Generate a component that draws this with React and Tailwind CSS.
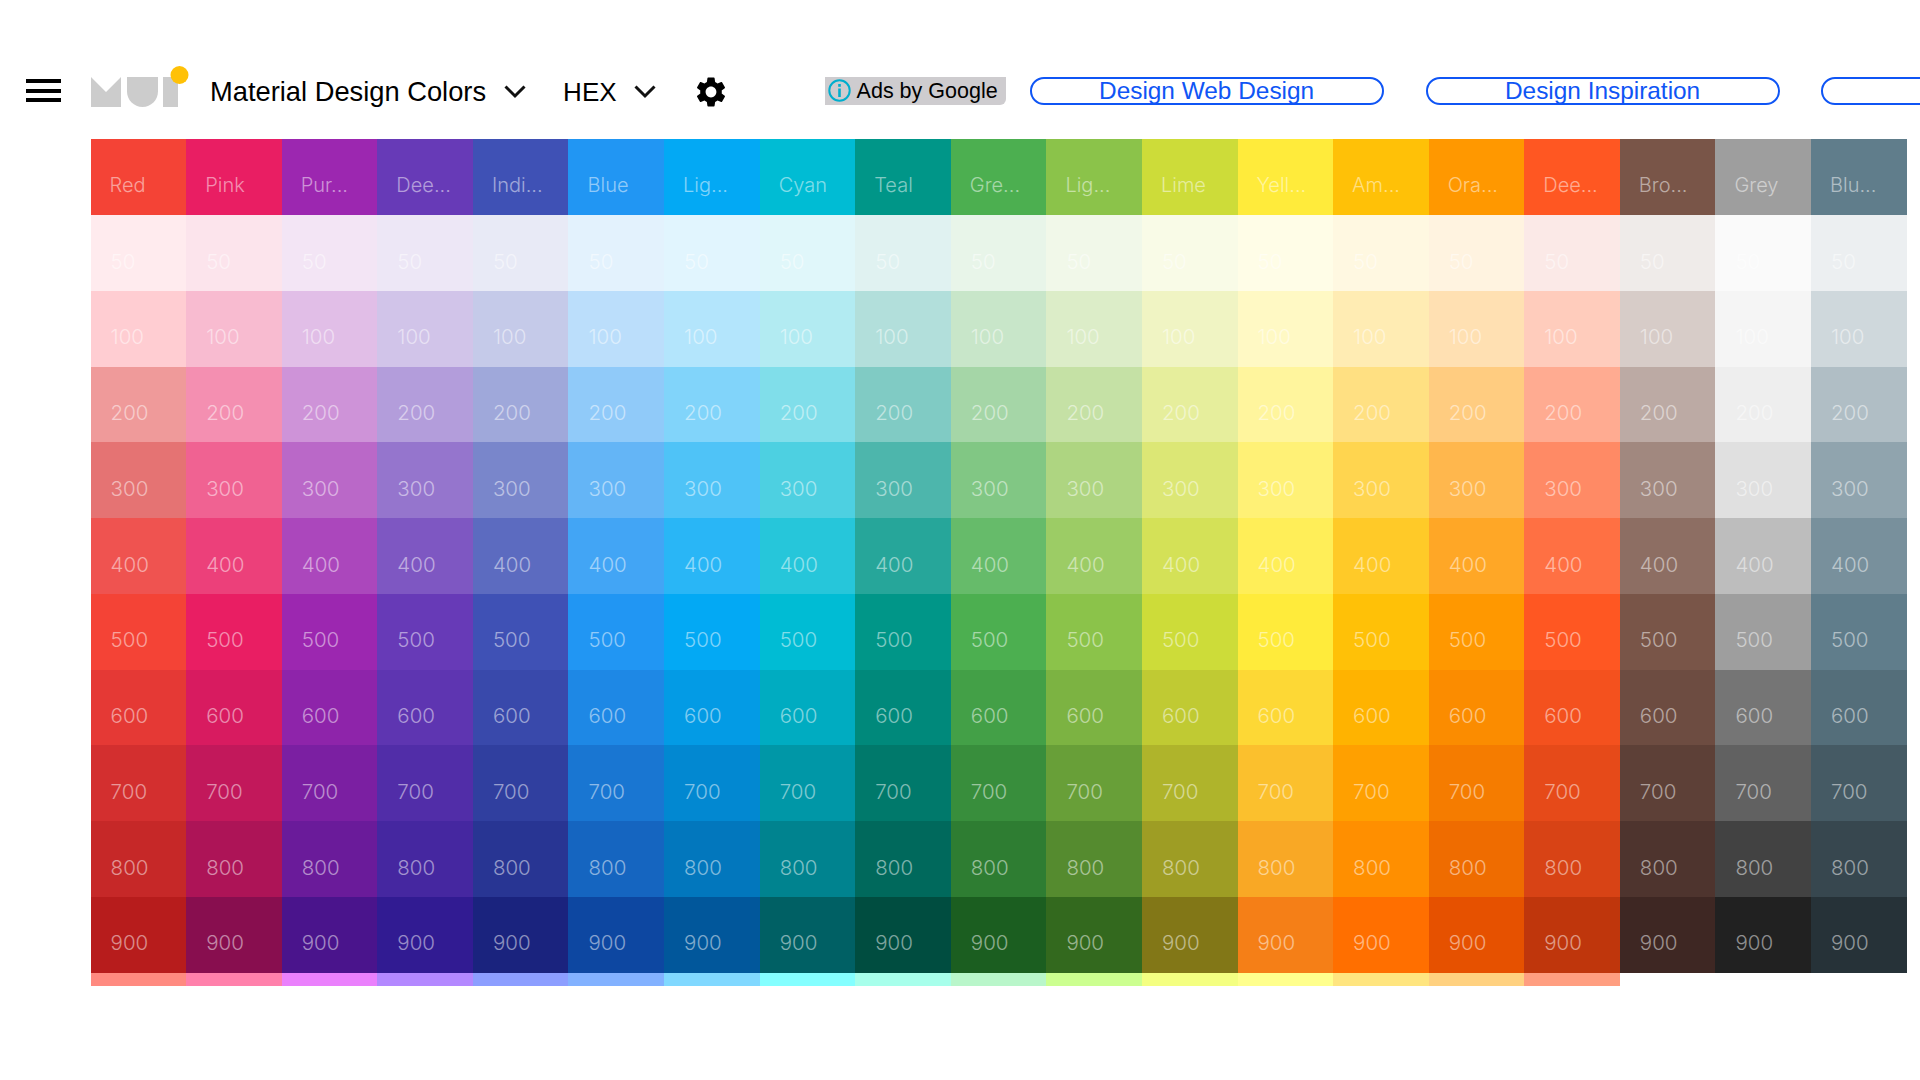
import { MdSettings } from "react-icons/md";

const shades = ["50", "100", "200", "300", "400", "500", "600", "700", "800", "900"];

const palette = [
  { label: "Red", main: "#F44336", tones: ["#FFEBEE", "#FFCDD2", "#EF9A9A", "#E57373", "#EF5350", "#F44336", "#E53935", "#D32F2F", "#C62828", "#B71C1C"], accent: "#FF8A80" },
  { label: "Pink", main: "#E91E63", tones: ["#FCE4EC", "#F8BBD0", "#F48FB1", "#F06292", "#EC407A", "#E91E63", "#D81B60", "#C2185B", "#AD1457", "#880E4F"], accent: "#FF80AB" },
  { label: "Pur...", main: "#9C27B0", tones: ["#F3E5F5", "#E1BEE7", "#CE93D8", "#BA68C8", "#AB47BC", "#9C27B0", "#8E24AA", "#7B1FA2", "#6A1B9A", "#4A148C"], accent: "#EA80FC" },
  { label: "Dee...", main: "#673AB7", tones: ["#EDE7F6", "#D1C4E9", "#B39DDB", "#9575CD", "#7E57C2", "#673AB7", "#5E35B1", "#512DA8", "#4527A0", "#311B92"], accent: "#B388FF" },
  { label: "Indi...", main: "#3F51B5", tones: ["#E8EAF6", "#C5CAE9", "#9FA8DA", "#7986CB", "#5C6BC0", "#3F51B5", "#3949AB", "#303F9F", "#283593", "#1A237E"], accent: "#8C9EFF" },
  { label: "Blue", main: "#2196F3", tones: ["#E3F2FD", "#BBDEFB", "#90CAF9", "#64B5F6", "#42A5F5", "#2196F3", "#1E88E5", "#1976D2", "#1565C0", "#0D47A1"], accent: "#82B1FF" },
  { label: "Lig...", main: "#03A9F4", tones: ["#E1F5FE", "#B3E5FC", "#81D4FA", "#4FC3F7", "#29B6F6", "#03A9F4", "#039BE5", "#0288D1", "#0277BD", "#01579B"], accent: "#80D8FF" },
  { label: "Cyan", main: "#00BCD4", tones: ["#E0F7FA", "#B2EBF2", "#80DEEA", "#4DD0E1", "#26C6DA", "#00BCD4", "#00ACC1", "#0097A7", "#00838F", "#006064"], accent: "#84FFFF" },
  { label: "Teal", main: "#009688", tones: ["#E0F2F1", "#B2DFDB", "#80CBC4", "#4DB6AC", "#26A69A", "#009688", "#00897B", "#00796B", "#00695C", "#004D40"], accent: "#A7FFEB" },
  { label: "Gre...", main: "#4CAF50", tones: ["#E8F5E9", "#C8E6C9", "#A5D6A7", "#81C784", "#66BB6A", "#4CAF50", "#43A047", "#388E3C", "#2E7D32", "#1B5E20"], accent: "#B9F6CA" },
  { label: "Lig...", main: "#8BC34A", tones: ["#F1F8E9", "#DCEDC8", "#C5E1A5", "#AED581", "#9CCC65", "#8BC34A", "#7CB342", "#689F38", "#558B2F", "#33691E"], accent: "#CCFF90" },
  { label: "Lime", main: "#CDDC39", tones: ["#F9FBE7", "#F0F4C3", "#E6EE9C", "#DCE775", "#D4E157", "#CDDC39", "#C0CA33", "#AFB42B", "#9E9D24", "#827717"], accent: "#F4FF81" },
  { label: "Yell...", main: "#FFEB3B", tones: ["#FFFDE7", "#FFF9C4", "#FFF59D", "#FFF176", "#FFEE58", "#FFEB3B", "#FDD835", "#FBC02D", "#F9A825", "#F57F17"], accent: "#FFFF8D" },
  { label: "Am...", main: "#FFC107", tones: ["#FFF8E1", "#FFECB3", "#FFE082", "#FFD54F", "#FFCA28", "#FFC107", "#FFB300", "#FFA000", "#FF8F00", "#FF6F00"], accent: "#FFE57F" },
  { label: "Ora...", main: "#FF9800", tones: ["#FFF3E0", "#FFE0B2", "#FFCC80", "#FFB74D", "#FFA726", "#FF9800", "#FB8C00", "#F57C00", "#EF6C00", "#E65100"], accent: "#FFD180" },
  { label: "Dee...", main: "#FF5722", tones: ["#FBE9E7", "#FFCCBC", "#FFAB91", "#FF8A65", "#FF7043", "#FF5722", "#F4511E", "#E64A19", "#D84315", "#BF360C"], accent: "#FF9E80" },
  { label: "Bro...", main: "#795548", tones: ["#EFEBE9", "#D7CCC8", "#BCAAA4", "#A1887F", "#8D6E63", "#795548", "#6D4C41", "#5D4037", "#4E342E", "#3E2723"] },
  { label: "Grey", main: "#9E9E9E", tones: ["#FAFAFA", "#F5F5F5", "#EEEEEE", "#E0E0E0", "#BDBDBD", "#9E9E9E", "#757575", "#616161", "#424242", "#212121"] },
  { label: "Blu...", main: "#607D8B", tones: ["#ECEFF1", "#CFD8DC", "#B0BEC5", "#90A4AE", "#78909C", "#607D8B", "#546E7A", "#455A64", "#37474F", "#263238"] },
];

function Chevron() {
  return (
    <svg width="22" height="14" viewBox="0 0 22 14" fill="none" stroke="#111" strokeWidth="3">
      <path d="M1.5 1.5L11 11L20.5 1.5" />
    </svg>
  );
}

function Logo() {
  return (
    <svg width="98" height="41" viewBox="0 0 98 41" className="shrink-0">
      <path d="M0 11L15 26L30 11V41H0Z" fill="#ccc" />
      <path d="M36 11H67V25.5C67 34 60 41 51.5 41S36 34 36 25.5Z" fill="#ccc" />
      <rect x="72" y="11" width="15" height="30" fill="#ccc" />
      <circle cx="88.5" cy="9" r="9" fill="#FFC107" />
    </svg>
  );
}

function HeadCell({ color, text }) {
  return (
    <div
      className="flex h-[75.75px] items-center pl-[19px] pt-[15px] text-[20px] font-light text-white/50"
      style={{ backgroundColor: color }}
    >
      {text}
    </div>
  );
}

function ShadeCell({ color, text }) {
  return (
    <div
      className="flex h-[75.75px] items-center pl-[20px] pt-[18px] text-[20.5px] font-light text-white/50"
      style={{ backgroundColor: color }}
    >
      {text}
    </div>
  );
}

export default function App() {
  return (
    <div className="h-screen w-screen overflow-hidden bg-white font-['Inter',sans-serif]">
      <header className="flex h-[139.3px] items-center pl-[26px] pt-[42.3px] font-['Liberation_Sans',sans-serif]">
        <div className="flex w-[35px] shrink-0 flex-col gap-[5.5px]">
          <span className="h-1 bg-black" />
          <span className="h-1 bg-black" />
          <span className="h-1 bg-black" />
        </div>
        <div className="ml-[30px] -mt-[9px] shrink-0">
          <Logo />
        </div>
        <span className="ml-[21px] mt-[3px] shrink-0 text-[27.3px] text-black">Material Design Colors</span>
        <span className="ml-[18px] mt-[2px] shrink-0">
          <Chevron />
        </span>
        <span className="ml-[37px] mt-[3px] shrink-0 text-[26px] text-black">HEX</span>
        <span className="ml-[17px] mt-[2px] shrink-0">
          <Chevron />
        </span>
        <MdSettings className="ml-[37px] mt-[2px] shrink-0 text-[36px] text-black" />
        <div className="ml-[96px] flex h-[28px] w-[181px] shrink-0 items-center rounded-br-md bg-[#cecccf] pl-[3px] text-[21.5px] text-black">
          <svg width="23" height="23" viewBox="0 0 23 23" fill="none" className="shrink-0">
            <circle cx="11.5" cy="11.5" r="10.2" stroke="#00aecd" strokeWidth="2" />
            <rect x="10.2" y="5" width="2.6" height="2.8" fill="#00aecd" />
            <rect x="10.2" y="9.5" width="2.6" height="8.5" fill="#00aecd" />
          </svg>
          <span className="ml-[6px] whitespace-nowrap">Ads by Google</span>
        </div>
        <a className="ml-[24px] flex h-[28px] w-[354px] shrink-0 items-center justify-center rounded-full border-2 border-[#0f55f5] text-[24.4px] text-[#0f55f5]">
          Design Web Design
        </a>
        <a className="ml-[42px] flex h-[28px] w-[354px] shrink-0 items-center justify-center rounded-full border-2 border-[#0f55f5] text-[24.4px] text-[#0f55f5]">
          Design Inspiration
        </a>
        <a className="ml-[41px] h-[28px] w-[354px] shrink-0 rounded-full border-2 border-[#0f55f5]" />
      </header>

      <div className="ml-[90.6px] flex w-[1816px]">
        {palette.map((col, i) => (
          <div key={i} className="w-[95.58px] shrink-0">
            <HeadCell color={col.main} text={col.label} />
            {col.tones.map((tone, j) => (
              <ShadeCell key={shades[j]} color={tone} text={shades[j]} />
            ))}
            {col.accent && <div className="h-[13.3px]" style={{ backgroundColor: col.accent }} />}
          </div>
        ))}
      </div>
    </div>
  );
}
